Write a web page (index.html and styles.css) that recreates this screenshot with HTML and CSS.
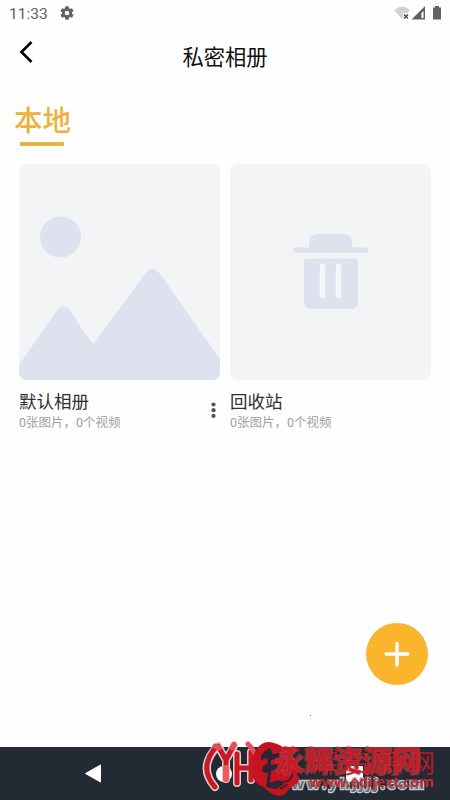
FILE: index.html
```html
<!DOCTYPE html>
<html lang="zh-CN">
<head>
<meta charset="utf-8">
<title>私密相册</title>
<link rel="stylesheet" href="styles.css">
</head>
<body>
<div class="screen">
  <header class="status">
    <span class="clock">11:33</span>
    <svg class="gear" width="16" height="16" viewBox="0 0 24 24"><path fill="#626262" fill-rule="evenodd" d="M19.4 13a7.8 7.8 0 0 0 0-2l2.1-1.7a.5.5 0 0 0 .1-.6l-2-3.5a.5.5 0 0 0-.6-.2l-2.5 1a7.3 7.3 0 0 0-1.7-1L14.500 2.400a.5.5 0 0 0-.5-.4h-4a.5.5 0 0 0-.5.4L9.200 5a7.300 7.300 0 0 0-1.700 1L5 5a.5.5 0 0 0-.6.2l-2 3.500a.5.5 0 0 0 .1.600L4.600 11a7.800 7.800 0 0 0 0 2l-2.100 1.700a.5.5 0 0 0-.1.600l2 3.500a.5.5 0 0 0 .6.2l2.500-1a7.300 7.300 0 0 0 1.700 1l.3 2.600a.5.5 0 0 0 .5.4h4a.5.5 0 0 0 .5-.4l.4-2.600a7.300 7.300 0 0 0 1.700-1l2.500 1a.5.5 0 0 0 .6-.2l2-3.500a.5.5 0 0 0-.1-.6zM12 15.500a3.500 3.500 0 1 1 0-7 3.500 3.500 0 0 1 0 7z"/></svg>
    <svg class="signals" width="50" height="18" viewBox="0 0 50 18">
      <path fill="#d2d2d2" d="M0 5Q8-2 16 5L13.500 8H9V13L8 14Z"/>
      <path stroke="#444" stroke-width="1.400" d="M10 9.500l4 4m0-4l-4 4"/>
      <path fill="#626262" fill-rule="evenodd" d="M31 1V14.500H17.500ZM29.500 6V13H27.500V8Z"/>
      <path fill="#626262" d="M41 2.500V1h4v1.500h2V14.500h-8V2.500Z"/>
    </svg>
  </header>
  <nav class="titlebar">
    <svg class="back" width="16" height="24" viewBox="0 0 16 24"><path d="M12.500 2L2.500 12L12.500 22" fill="none" stroke="#050505" stroke-width="2.700"/></svg>
    <h1>私密相册</h1>
  </nav>
  <div class="tabs"><span class="tab">本地</span></div>
  <main class="albums">
    <article class="album">
      <svg class="cover" width="201" height="216" viewBox="0 0 201 216">
        <circle cx="41.500" cy="73" r="20.500" fill="#dee2ee"/>
        <path fill="#dee2ee" d="M0 201L37.500 147Q44.500 138 52 147Q61 164 74.500 180L126 110Q133 100 141 110L201 195V216H0Z"/>
      </svg>
      <div class="caption">
        <div><h2>默认相册</h2><p>0张图片，0个视频</p></div>
        <svg class="more" width="5" height="17" viewBox="0 0 5 17" fill="#555"><circle cx="2.500" cy="2.500" r="2.100"/><circle cx="2.500" cy="8.200" r="2.100"/><circle cx="2.500" cy="13.900" r="2.100"/></svg>
      </div>
    </article>
    <article class="album">
      <svg class="cover" width="201" height="216" viewBox="0 0 201 216">
        <path fill="#dee2ee" d="M66 83.500H79V79Q79 70 88 70H113Q122 70 122 79V83.500H135.500A2.700 2.700 0 0 1 135.500 89H66A2.700 2.700 0 0 1 66 83.500Z"/>
        <path fill="#dee2ee" d="M76 94.500H126Q128 94.500 128 97V138Q128 145 121 145H81Q74 145 74 138V97Q74 94.500 76 94.500Z"/>
        <path stroke="#f3f6fa" stroke-width="5.500" stroke-linecap="round" d="M92.500 102.500V131.500M108.500 102.500V131.500"/>
      </svg>
      <div class="caption"><div><h2>回收站</h2><p>0张图片，0个视频</p></div></div>
    </article>
  </main>
  <button class="add" aria-label="添加"><svg width="62" height="62" viewBox="0 0 62 62"><path d="M31 20.500V42M20.200 31H41.800" stroke="#fff" stroke-width="3.500" stroke-linecap="round"/></svg></button>
  <i class="speck"></i>
  <footer class="navbar">
    <svg width="17" height="19" viewBox="0 0 17 19"><path d="M.5 9.500L15.500 1V18Z" fill="#fff" stroke="#fff" stroke-linejoin="round"/></svg>
    <svg width="16" height="16" viewBox="0 0 16 16"><circle cx="8" cy="8" r="8" fill="#fff"/></svg>
    <svg width="17" height="16" viewBox="0 0 17 16"><rect width="17" height="16" rx="1" fill="#fff"/></svg>
  </footer>
  <svg class="watermark" width="250" height="65" viewBox="200 735 250 65">
    <g fill="none" stroke-linecap="round" stroke-linejoin="round">
      <path class="halo" d="M216 748Q198 768 215 787M218 746L226 760L234 746M226 760V779M237 754V783M237 768H251M251 752V780"/>
      <path class="stroke" d="M216 747Q198 768 215 787M218 746L226 760L234 745M226 760V779M237 754V783M237 768H251M251 752V780"/>
      <path d="M215 746L219 748M232 748L234 744M248 744Q257 753 260 766" stroke="#e84e57" stroke-width="5"/>
      <path d="M226 768V779" stroke="#ee5960" stroke-width="6"/>
    </g>
    <text class="url light" x="276" y="789" textLength="148">www.yhjjjj.com</text>
    <path fill="#c51320" d="M256 750Q263 739 274 743Q282 745 284 749Q295 743 300 751L290 754Q302 764 297 775Q302 778 296 784L288 790Q285 796 278 796Q267 792 264 787Q251 783 252 769Q251 757 256 750Z"/>
    <path fill="#292733" d="M265 751L270 748L273 754L280 753L279 758L271 760V765L278 764L276 770L271 771L270 783L278 780L284 784L276 789L266 787L268 773L262 772L263 766L268 763L267 758L261 760V755Z"/>
    <path fill="none" stroke="#292733" stroke-width="1.500" d="M281 782Q294 782 292 770M280 789L288 784"/>
    <text class="name second" x="312" y="773" textLength="123">辉资源网</text>
    <text class="name front" x="275" y="771.500" textLength="146">永辉资源网</text>
    <text class="url red" x="309" y="787" textLength="125">www.edijext.com</text>
  </svg>
</div>
</body>
</html>
```
FILE: styles.css
```css
* { box-sizing: border-box; }
body { margin: 0; background: #fff; font-family: Roboto, "Noto Sans CJK SC", sans-serif; }
h1, h2, p { margin: 0; font-weight: 400; }
.screen { position: relative; width: 450px; height: 800px; display: flex; flex-direction: column; overflow: hidden; background: #fefefe; }
.status { display: flex; align-items: center; height: 28px; padding: 0 8px 0 9px; }
.clock { width: 50px; font-size: 15.5px; line-height: 28px; color: #626262; }
.gear { margin-top: -2px; }
.signals { margin-left: auto; margin-top: 0; margin-right: -2px; }
.titlebar { display: grid; grid-template-columns: 42px 1fr 42px; height: 58px; }
.back { margin: 12px 0 0 19px; }
h1 { text-align: center; font-size: 21.3px; line-height: 59px; color: #111; }
.tabs { height: 78px; padding: 18px 0 0 14px; }
.tab { display: block; width: 60px; font-size: 28.5px; line-height: 36px; font-weight: 500; color: #ecb23c; }
.tab::after { content: ""; display: block; width: 44px; height: 4px; margin: 2px 0 0 6px; border-radius: 1px; background: #e6b346; }
.albums { display: grid; grid-template-columns: 201px 201px; gap: 10px; padding-left: 19px; height: 290px; }
.cover { display: block; border-radius: 8px; background: #f2f4f6; }
.caption { display: flex; justify-content: space-between; padding-top: 10px; }
h2 { font-size: 17.5px; line-height: 25px; color: #303030; }
.caption p { font-size: 12.5px; line-height: 16px; color: #a0a0a0; }
.more { margin: 12px 4px 0 0; }
.add { position: absolute; left: 366px; top: 623px; width: 62px; height: 62px; padding: 0; border: 0; border-radius: 50%; background: #fab52c; }
.add svg { display: block; }
.speck { position: absolute; left: 310px; top: 715px; width: 1px; height: 1px; background: #777; }
.navbar { display: flex; align-items: center; height: 53px; margin-top: auto; padding: 0 87px 0 85px; justify-content: space-between; background: #222b33; }
.watermark { position: absolute; left: 200px; top: 735px; }
.halo { stroke: #eac8ce; stroke-width: 8px; }
.stroke { stroke: #c41b25; stroke-width: 5px; }
.name { font-family: "Noto Sans CJK SC", sans-serif; font-size: 29px; font-weight: 700; fill: #c71c25; }
.front { stroke: #b4566280; stroke-width: 2px; paint-order: stroke; }
.second { font-size: 26px; font-weight: 400; fill: #b91724; }
.url { font-family: "Open Sans", sans-serif; font-size: 15px; font-weight: 700; }
.light { fill: #6d6b75; stroke: #c9cbd1; stroke-width: 2.5px; paint-order: stroke; }
.red { fill: #b92e39; }
```
